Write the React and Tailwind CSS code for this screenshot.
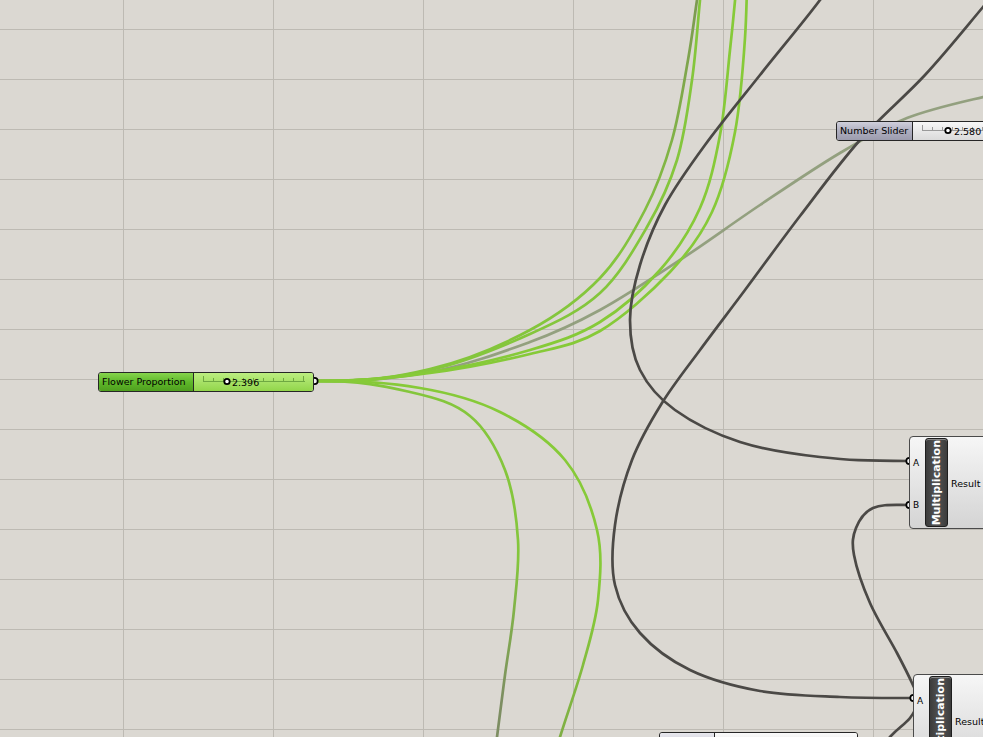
import React from "react";

// canvas wires, traced as point lists and smoothed (catmull-rom -> cubic)
function toPath(pts, hs, he) {
  const n = pts.length;
  const T = pts.map((p, i) => {
    if (i === 0) return hs ? [(pts[1][0] - p[0]) * 1.5, 0] : [pts[1][0] - p[0], pts[1][1] - p[1]];
    if (i === n - 1) return he ? [(p[0] - pts[i - 1][0]) * 1.5, 0] : [p[0] - pts[i - 1][0], p[1] - pts[i - 1][1]];
    return [(pts[i + 1][0] - pts[i - 1][0]) / 2, (pts[i + 1][1] - pts[i - 1][1]) / 2];
  });
  let d = `M${pts[0][0]},${pts[0][1]}`;
  for (let i = 0; i < n - 1; i++) {
    const a = pts[i];
    const b = pts[i + 1];
    d += ` C${a[0] + T[i][0] / 3},${a[1] + T[i][1] / 3} ${b[0] - T[i + 1][0] / 3},${b[1] - T[i + 1][1] / 3} ${b[0]},${b[1]}`;
  }
  return d;
}

const SRC = [316, 381];

const WIRES = [
  { c: "#8b9a76", o: 0.9, hs: true, pts: [SRC, [430, 372], [530, 342], [600, 310], [680, 260], [760, 205], [840, 153], [907, 118], [983, 97], [1060, 82]] },
  { c: "url(#gA1)", hs: true, pts: [SRC, [430, 369], [530, 330], [600, 278], [645, 210], [672, 140], [688, 60], [697, 0], [706, -60]] },
  { c: "#84c63c", hs: true, pts: [SRC, [430, 370], [530, 334], [600, 293], [647, 227], [677, 160], [692, 80], [700, 0], [706, -60]] },
  { c: "#86ca38", hs: true, pts: [SRC, [430, 372], [530, 350], [600, 322], [660, 270], [700, 208], [720, 135], [730, 50], [736, -10], [740, -60]] },
  { c: "#86ca38", hs: true, pts: [SRC, [430, 373], [530, 354], [600, 331], [670, 272], [712, 212], [735, 132], [745, 38], [748, -60]] },
  { c: "url(#gD1)", hs: true, pts: [SRC, [410, 392], [470, 416], [505, 470], [518, 540], [514, 610], [505, 675], [497, 737], [490, 790]] },
  { c: "url(#gD2)", hs: true, pts: [SRC, [420, 388], [500, 412], [565, 460], [597, 530], [598, 600], [583, 665], [560, 737], [545, 790]] },
  { c: "#4b4946", he: true, pts: [[845, -40], [820, 0], [760, 75], [705, 145], [665, 205], [640, 265], [630, 320], [640, 370], [675, 410], [740, 442], [820, 457], [909, 461]] },
  { c: "#4b4946", he: true, pts: [[1030, -50], [983, 7], [925, 75], [860, 140], [800, 216], [745, 290], [700, 350], [662, 403], [632, 460], [615, 525], [615, 585], [640, 633], [690, 670], [760, 691], [840, 697], [913, 698]] },
  { c: "#4b4946", hs: true, pts: [[909, 505], [873, 508], [856, 528], [854, 555], [870, 603], [897, 653], [912, 683], [918, 700], [910, 718], [890, 737], [860, 775]] },
];

const VX = [123, 273, 423, 573, 723, 873];
const HY = Array.from({ length: 15 }, (_, i) => 29 + i * 50);

function Track({ width, knob, ticks, line }) {
  return (
    <svg className="absolute inset-0" width={width} height={18}>
      <line x1={9} y1={8.5} x2={width - 8} y2={8.5} stroke={line} strokeWidth={1} />
      {ticks.map((x, i) => (
        <line key={i} x1={x + 0.5} y1={i === 0 || i === ticks.length - 1 ? 3 : 5} x2={x + 0.5} y2={8.5} stroke={line} strokeWidth={1} />
      ))}
      <circle cx={knob} cy={8.5} r={2.7} fill="#ffffff" stroke="#000000" strokeWidth={1.8} />
    </svg>
  );
}

function MultNode({ className }) {
  return (
    <div className={`absolute flex h-[93px] w-[130px] rounded-[4px] border border-[#4a4a4a] bg-gradient-to-b from-[#f6f6f6] to-[#d4d4d4] py-[1px] ${className}`}>
      <div className="flex w-[15px] flex-col justify-around pl-[3px] pt-[4px] text-[9px] leading-none text-black">
        <span>A</span>
        <span>B</span>
      </div>
      <div className="flex w-[23px] items-center justify-center rounded-[3px] border border-[#1e1e1e] bg-gradient-to-r from-[#3c3c3c] via-[#555555] to-[#3c3c3c] shadow-[inset_0_1px_0_#8a8a8a]">
        <span className="rotate-180 text-[11px] font-bold leading-none text-white [writing-mode:vertical-rl]">Multiplication</span>
      </div>
      <div className="flex items-center pl-[3px] pt-[3px] text-[9.5px] text-black">Result</div>
    </div>
  );
}

export default function App() {
  return (
    <div className="relative h-[737px] w-[983px] overflow-hidden bg-[#dbd8d2] font-['DejaVu_Sans',sans-serif]">
      <svg className="absolute inset-0" width={983} height={737}>
        <defs>
          <linearGradient id="gA1" gradientUnits="userSpaceOnUse" x1="0" y1="260" x2="0" y2="0">
            <stop offset="0" stopColor="#84c63c" />
            <stop offset="1" stopColor="#7c9a52" />
          </linearGradient>
          <linearGradient id="gD1" gradientUnits="userSpaceOnUse" x1="0" y1="560" x2="0" y2="700">
            <stop offset="0" stopColor="#84c63c" />
            <stop offset="1" stopColor="#7d8e62" />
          </linearGradient>
          <linearGradient id="gD2" gradientUnits="userSpaceOnUse" x1="0" y1="600" x2="0" y2="737">
            <stop offset="0" stopColor="#86ca38" />
            <stop offset="1" stopColor="#7fae45" />
          </linearGradient>
        </defs>
        {VX.map((x) => (
          <line key={x} x1={x + 0.5} y1={0} x2={x + 0.5} y2={737} stroke="#bdbab3" strokeWidth={1} />
        ))}
        {HY.map((y) => (
          <line key={y} x1={0} y1={y + 0.5} x2={983} y2={y + 0.5} stroke="#bdbab3" strokeWidth={1} />
        ))}
        {WIRES.map((w, i) => (
          <path key={i} d={toPath(w.pts, w.hs, w.he)} fill="none" stroke={w.c} strokeOpacity={w.o ?? 1} strokeWidth={2.7} strokeLinecap="round" />
        ))}
        <circle cx={314.5} cy={381} r={3.2} fill="#f2f2f2" stroke="#000" strokeWidth={1.7} />
        <circle cx={909.5} cy={461} r={3.2} fill="#f2f2f2" stroke="#000" strokeWidth={1.7} />
        <circle cx={909.5} cy={505} r={3.2} fill="#f2f2f2" stroke="#000" strokeWidth={1.7} />
        <circle cx={913.5} cy={698} r={3.2} fill="#f2f2f2" stroke="#000" strokeWidth={1.7} />
      </svg>

      {/* Flower Proportion slider */}
      <div className="absolute left-[98px] top-[372px] flex h-[20px] w-[216px] overflow-hidden rounded-[3px] border border-[#262626]">
        <div className="flex w-[95px] items-center border-r border-[#262626] bg-gradient-to-b from-[#86d44c] via-[#5fb82a] to-[#4f9f1f] pl-[3px] pt-[1px] text-[9.5px] text-black">
          Flower Proportion
        </div>
        <div className="relative flex-1 bg-gradient-to-b from-[#bcee80] to-[#92d54a]">
          <Track width={119} knob={33} line="#6fa842" ticks={[9, 19, 29, 39, 49, 59, 69, 79, 89, 99, 109]} />
          <span className="absolute left-[38px] top-[5px] text-[9.5px] leading-none text-black">2.396</span>
        </div>
      </div>

      {/* Number Slider */}
      <div className="absolute left-[836px] top-[121px] flex h-[20px] w-[200px] overflow-hidden rounded-[3px] border border-[#262626]">
        <div className="flex w-[76px] items-center border-r border-[#262626] bg-gradient-to-b from-[#cfcfdb] via-[#aeaebf] to-[#9c9cae] pl-[3px] pt-[1px] text-[9.5px] text-black">
          Number Slider
        </div>
        <div className="relative flex-1 bg-gradient-to-b from-[#f7f7f7] to-[#dadada]">
          <Track width={122} knob={35} line="#9a9a9a" ticks={[9, 19, 29, 39, 49, 59, 69, 79, 89, 99, 112]} />
          <span className="absolute left-[41px] top-[5px] text-[9.5px] leading-none text-black">2.580</span>
        </div>
      </div>

      <MultNode className="left-[909px] top-[436px]" />
      <MultNode className="left-[913px] top-[674px]" />

      {/* slider peeking in at the bottom */}
      <div className="absolute left-[659px] top-[732px] flex h-[20px] w-[199px] overflow-hidden rounded-[3px] border border-[#262626]">
        <div className="w-[55px] border-r border-[#262626] bg-gradient-to-b from-[#e8e8ee] to-[#c4c4d0]" />
        <div className="flex-1 bg-gradient-to-b from-[#fbfbfb] to-[#e0e0e0]" />
      </div>
    </div>
  );
}
